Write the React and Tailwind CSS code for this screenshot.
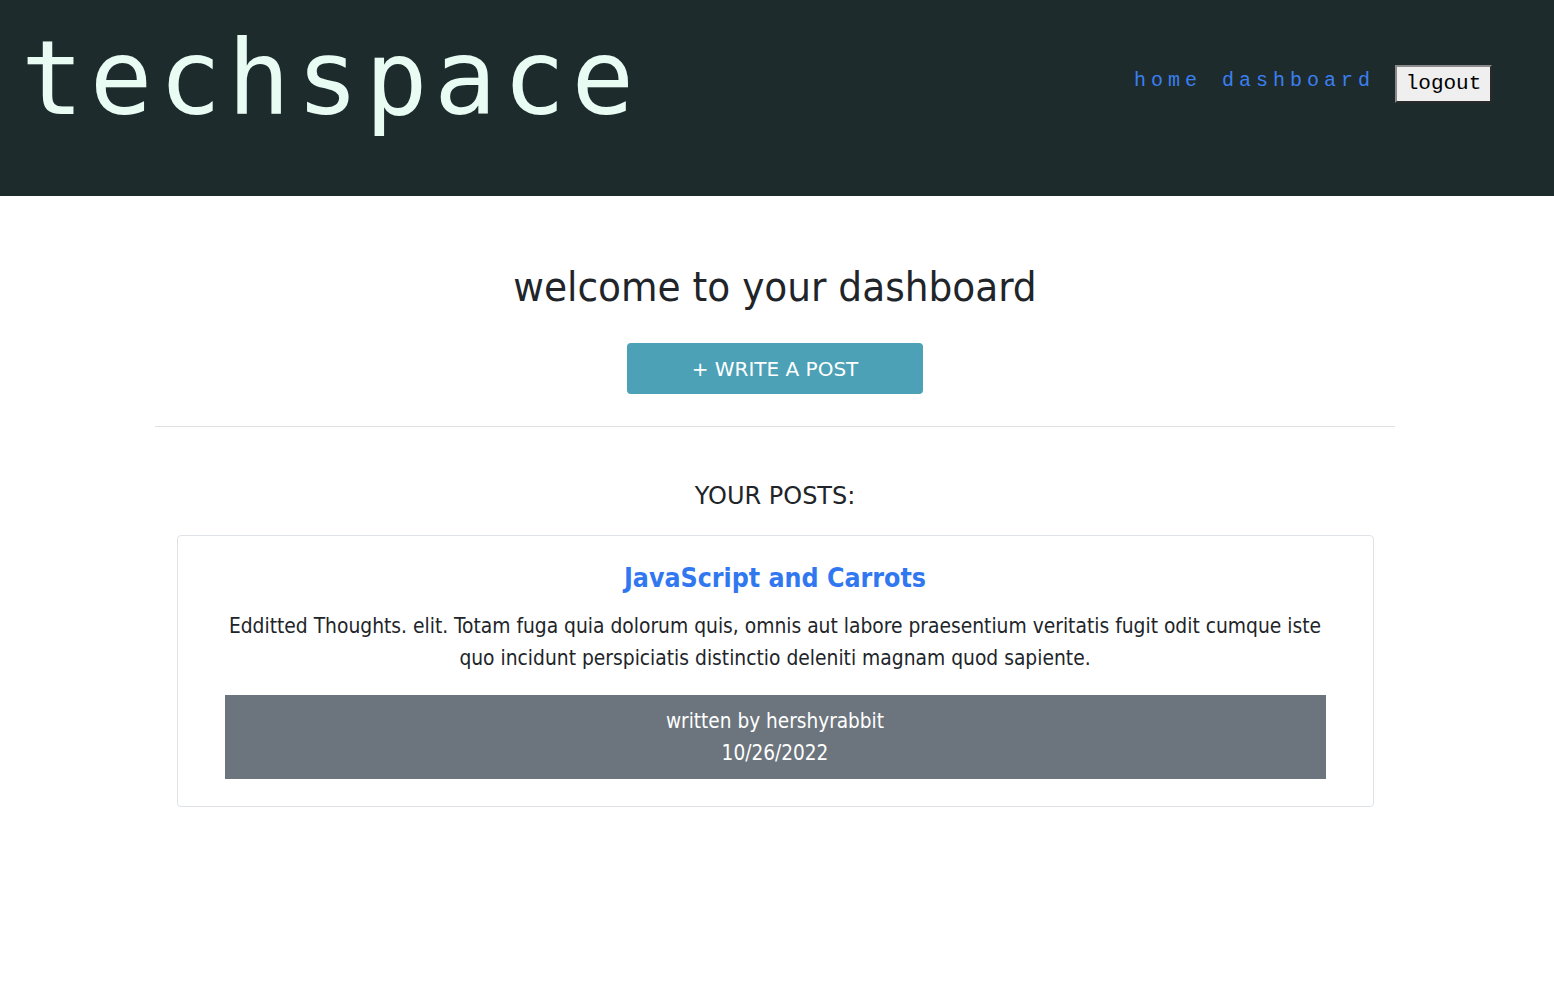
export default function App() {
  const sans = { fontFamily: '"DejaVu Sans Condensed", "DejaVu Sans", sans-serif' };
  const wide = { fontFamily: '"DejaVu Sans", sans-serif' };
  return (
    <div className="min-h-[1006px] bg-white" style={sans}>
      <header className="h-[196px] bg-[#1e2b2d] flex items-start justify-between pl-[21px] pr-[62px]">
        <h1 className="text-[104px] leading-none tracking-[6.2px] mt-[26px] text-[#e8fcf4]" style={{ fontFamily: '"DejaVu Sans Mono", monospace' }}>
          techspace
        </h1>
        <nav className="flex items-start mt-[65px]" style={{ fontFamily: '"Liberation Mono", monospace' }}>
          <a className="mt-[4px] text-[20px] leading-[24px] tracking-[5px] text-[#3b7ff0]">home</a>
          <a className="ml-[20px] mt-[4px] text-[20px] leading-[24px] tracking-[5px] text-[#3b7ff0]">dashboard</a>
          <button className="ml-[20px] h-[38px] w-[97px] bg-[#efefef] text-black text-[21px] border-2 border-t-[#8a8a8a] border-l-[#8a8a8a] border-b-[#2a2a2a] border-r-[#2a2a2a]">
            logout
          </button>
        </nav>
      </header>
      <main className="flex flex-col items-center pr-[4px]">
        <h2 className="text-[41.7px] text-[#212529] mt-[67px] leading-[48px]">welcome to your dashboard</h2>
        <button className="mt-[32px] w-[296px] h-[51px] rounded-[4px] bg-[#4ca1b7] text-white text-[20px]" style={wide}>+ WRITE A POST</button>
        <div className="w-[1240px] h-px bg-[#e2e2e2] mt-[32px]" />
        <h3 className="mt-[54px] text-[24px] leading-[30px] text-[#212529]" style={wide}>YOUR POSTS:</h3>
        <div className="mt-[24px] w-[1197px] border border-[#dee2e6] rounded-[4px] px-[47px] pt-[25px] pb-[27px] flex flex-col items-center text-center">
          <h4 className="text-[26.5px] font-bold text-[#3178f0] leading-[34px]">JavaScript and Carrots</h4>
          <p className="mt-[15px] text-[20.8px] leading-[32px] text-[#212529]">
            Edditted Thoughts. elit. Totam fuga quia dolorum quis, omnis aut labore praesentium veritatis fugit odit cumque iste quo incidunt perspiciatis distinctio deleniti magnam quod sapiente.
          </p>
          <div className="mt-[21px] w-full bg-[#6c757d] text-white text-[20.6px] leading-[32px] py-[10px]">
            <div>written by hershyrabbit</div>
            <div>10/26/2022</div>
          </div>
        </div>
      </main>
    </div>
  );
}
